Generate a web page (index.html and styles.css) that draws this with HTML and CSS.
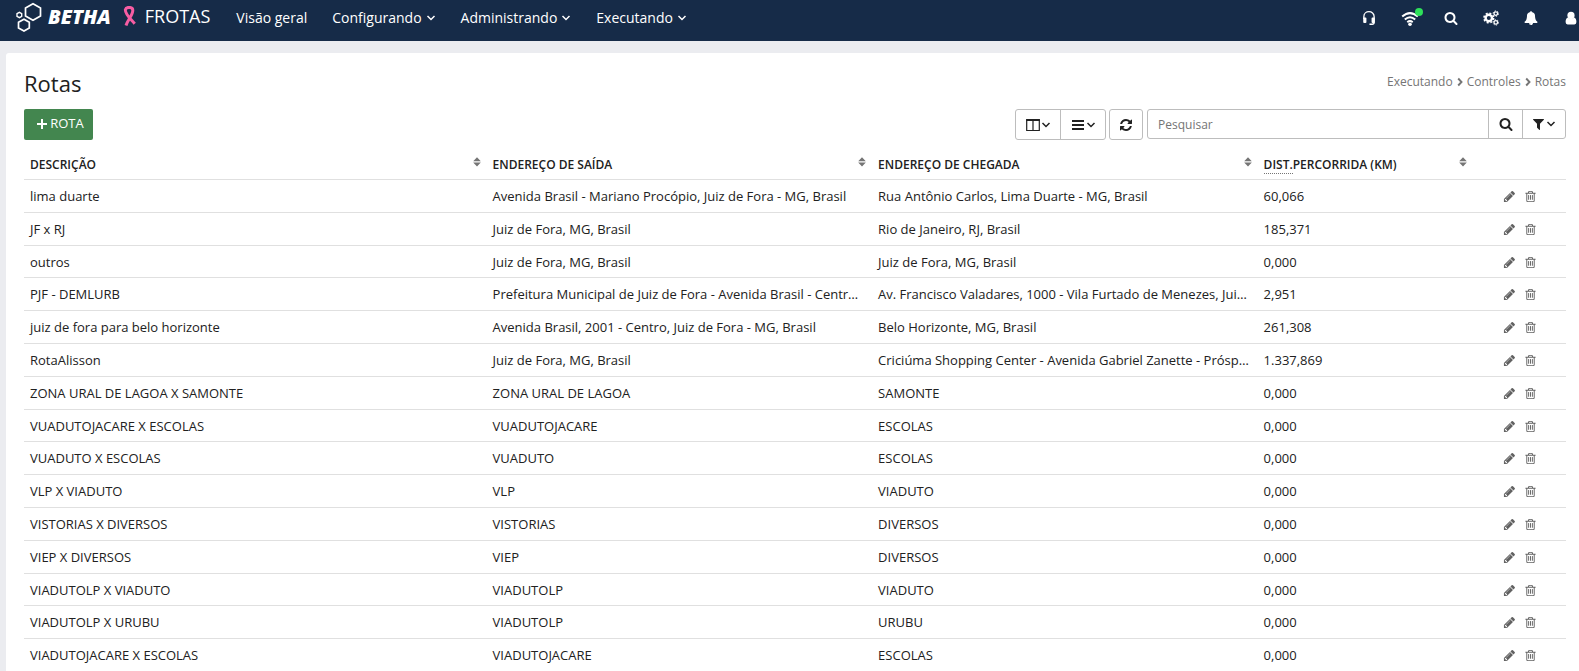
FILE: index.html
```html
<!DOCTYPE html>
<html lang="pt-BR">
<head>
<meta charset="utf-8">
<title>Frotas - Rotas</title>
<link rel="stylesheet" href="styles.css">
</head>
<body>
<svg class="sprite" aria-hidden="true">
  <symbol id="down" viewBox="0 0 10 10"><path d="M1.5 3 L5 6.5 L8.5 3" fill="none" stroke="currentColor" stroke-width="1.5"/></symbol>
  <symbol id="right" viewBox="0 0 6 10"><path d="M1.2 1.5 L4.5 5 L1.2 8.5" fill="none" stroke="currentColor" stroke-width="1.9"/></symbol>
  <symbol id="sort" viewBox="0 0 8 10"><path d="M4 0.3 L7.8 4.2 H0.2Z M0.2 5.6 H7.8 L4 9.6Z"/></symbol>
  <symbol id="search" viewBox="0 0 1792 1792"><path d="M1216 832q0-185-131.5-316.5t-316.5-131.5-316.5 131.5-131.5 316.5 131.5 316.5 316.5 131.5 316.5-131.5 131.5-316.5zm512 832q0 52-38 90t-90 38q-54 0-90-38l-343-342q-179 124-399 124-143 0-273.5-55.5t-225-150-150-225-55.5-273.5 55.5-273.5 150-225 225-150 273.5-55.5 273.5 55.5 225 150 150 225 55.5 273.5q0 220-124 399l343 343q37 37 37 90z"/></symbol>
  <symbol id="filter" viewBox="190 0 1412 1792"><path d="M1595 295q17 41-14 70l-493 493v742q0 42-39 59-13 5-25 5-27 0-45-19l-256-256q-19-19-19-45v-486l-493-493q-31-29-14-70 17-39 59-39h1280q42 0 59 39z"/></symbol>
  <symbol id="refresh" viewBox="0 0 1792 1792"><path d="M1639 1056q0 5-1 7-64 268-268 434.5t-478 166.5q-146 0-282.5-55t-243.5-157l-129 129q-19 19-45 19t-45-19-19-45v-448q0-26 19-45t45-19h448q26 0 45 19t19 45-19 45l-137 137q71 66 161 102t187 36q134 0 250-65t186-179q11-17 53-117 8-23 30-23h192q13 0 22.5 9.5t9.5 22.5zm25-800v448q0 26-19 45t-45 19h-448q-26 0-45-19t-19-45 19-45l138-138q-148-137-349-137-134 0-250 65t-186 179q-11 17-53 117-8 23-30 23h-199q-13 0-22.5-9.5t-9.5-22.5v-7q65-268 270-434.5t480-166.5q146 0 284 55.5t245 156.5l130-129q19-19 45-19t45 19 19 45z"/></symbol>
  <symbol id="pencil" viewBox="0 0 1792 1792"><path d="M491 1536l91-91-235-235-91 91v107h128v128h107zm523-928q0-22-22-22-10 0-17 7l-542 542q-7 7-7 17 0 22 22 22 10 0 17-7l542-542q7-7 7-17zm-54-192l416 416-832 832h-416v-416zm683 96q0 53-37 90l-166 166-416-416 166-165q36-38 90-38 53 0 91 38l235 234q37 39 37 91z"/></symbol>
  <symbol id="trash" viewBox="0 0 1792 1792"><path d="M704 736v576q0 14-9 23t-23 9h-64q-14 0-23-9t-9-23v-576q0-14 9-23t23-9h64q14 0 23 9t9 23zm256 0v576q0 14-9 23t-23 9h-64q-14 0-23-9t-9-23v-576q0-14 9-23t23-9h64q14 0 23 9t9 23zm256 0v576q0 14-9 23t-23 9h-64q-14 0-23-9t-9-23v-576q0-14 9-23t23-9h64q14 0 23 9t9 23zm128 724v-948h-896v948q0 22 7 40.5t14.5 27 10.5 8.5h832q3 0 10.5-8.5t14.5-27 7-40.5zm-672-1076h448l-48-117q-7-9-17-11h-317q-10 2-17 11zm928 32v64q0 14-9 23t-23 9h-96v948q0 83-47 143.5t-113 60.5h-832q-66 0-113-58.5t-47-141.5v-952h-96q-14 0-23-9t-9-23v-64q0-14 9-23t23-9h309l70-167q15-37 54-63t79-26h320q40 0 79 26t54 63l70 167h309q14 0 23 9t9 23z"/></symbol>
  <symbol id="bell" viewBox="0 0 1792 1792"><path d="M912 1696q0-16-16-16-59 0-101.5-42.5t-42.5-101.5q0-16-16-16t-16 16q0 73 51.5 124.5t124.5 51.5q16 0 16-16zm816-288q0 52-38 90t-90 38h-448q0 106-75 181t-181 75-181-75-75-181h-448q-52 0-90-38t-38-90q50-42 91-88t85-119.5 74.5-158.5 50-206 19.5-260q0-152 117-282.5t307-158.5q-8-19-8-39 0-40 28-68t68-28 68 28 28 68q0 20-8 39 190 28 307 158.5t117 282.5q0 139 19.5 260t50 206 74.5 158.5 85 119.5 91 88z"/></symbol>
</svg>

<header class="topbar">
  <a class="brand" href="#">
    <svg class="brand-mark" viewBox="0 0 28 30" aria-hidden="true"><g fill="none" stroke="#fff" stroke-width="1.7"><path d="M10.5 6 L18 1.8 L25.5 6 V14 L18 18.2 L10.5 14Z"/><path d="M3.5 20.3 L9 17.2 L14.3 20.3 V26 L9 29 L3.5 26Z"/><path d="M2 11.6 L4.4 10.3 L6.7 11.6 V14.4 L4.4 15.7 L2 14.4Z" stroke-width="1.4"/></g></svg>
    <span class="brand-name">BETHA</span>
    <svg class="ribbon" viewBox="0 0 14 21" aria-hidden="true"><path d="M3 19.5 C5 13 9.8 9.5 9.8 4.2 C9.8 0.6 3.2 0.6 2.4 3.6 C1.7 8 8.2 13.5 11.7 17.8" fill="none" stroke="#f75da3" stroke-width="3"/></svg>
    <span class="product">FROTAS</span>
  </a>
  <nav class="menu">
    <a href="#">Visão geral</a>
    <a href="#">Configurando<svg class="caret"><use href="#down"/></svg></a>
    <a href="#">Administrando<svg class="caret"><use href="#down"/></svg></a>
    <a href="#">Executando<svg class="caret"><use href="#down"/></svg></a>
  </nav>
  <div class="tools">
    <button type="button" aria-label="Suporte"><svg viewBox="0 0 16 18"><path d="M2.2 10 V7.5 C2.2 0 13.8 0 13.8 7.5 V14 Q13.8 16 11.5 16 H8.5" fill="none" stroke="currentColor" stroke-width="1.5"/><rect x="1.5" y="8.5" width="3.6" height="6" rx="1"/><rect x="10.9" y="8.5" width="3.6" height="6" rx="1"/></svg></button>
    <button type="button" aria-label="Conexão" class="wifi"><svg viewBox="0 0 18 18"><g fill="none" stroke="currentColor" stroke-width="2"><path d="M1.2 7.6 Q9 0.6 16.8 7.6"/><path d="M3.8 10.6 Q9 5.8 14.2 10.6"/><path d="M6.3 13.2 Q9 10.8 11.7 13.2"/></g><circle cx="9" cy="15.2" r="1.8"/></svg><span class="status"></span></button>
    <button type="button" aria-label="Buscar"><svg class="small"><use href="#search"/></svg></button>
    <button type="button" aria-label="Configurações"><svg viewBox="0 0 16 16"><g fill="none" stroke="currentColor"><circle cx="5.8" cy="8" r="3.2" stroke-width="2.4"/><circle cx="5.8" cy="8" r="4.8" stroke-width="1.6" stroke-dasharray="2 1.77"/><circle cx="12.8" cy="3.6" r="1.8" stroke-width="1.3"/><circle cx="12.8" cy="3.6" r="2.7" stroke-width="1" stroke-dasharray="1.3 1.5"/><circle cx="12.8" cy="12.4" r="1.8" stroke-width="1.3"/><circle cx="12.8" cy="12.4" r="2.7" stroke-width="1" stroke-dasharray="1.3 1.5"/></g></svg></button>
    <button type="button" aria-label="Notificações"><svg class="small"><use href="#bell"/></svg></button>
    <button type="button" aria-label="Usuário"><svg viewBox="0 0 16 16"><circle cx="8" cy="5.4" r="3.6"/><path d="M5 7.5 Q2.6 8 2.6 12 Q2.6 14.4 4.6 14.4 H11.4 Q13.4 14.4 13.4 12 Q13.4 8 11 7.5 Q8 10.6 5 7.5Z"/></svg></button>
  </div>
</header>

<main class="card">
  <div class="heading">
    <h1>Rotas</h1>
    <nav class="crumbs" aria-label="Localização"><span>Executando</span><svg><use href="#right"/></svg><span>Controles</span><svg><use href="#right"/></svg><span>Rotas</span></nav>
  </div>
  <div class="actions">
    <button type="button" class="add"><svg viewBox="0 0 10 10"><path d="M5 0 V10 M0 5 H10" stroke="currentColor" stroke-width="2"/></svg>ROTA</button>
    <div class="group push">
      <button type="button" class="view" aria-label="Colunas"><svg class="icon" viewBox="0 0 14 14"><path d="M0.7 2 H13.3 M0.7 1.5 V12.5 H13.3 V1.5 M7 2 V12.5" fill="none" stroke="currentColor" stroke-width="1.2"/><path d="M0.1 1 H13.9 V3 H0.1Z"/></svg><svg class="caret"><use href="#down"/></svg></button>
      <button type="button" class="view" aria-label="Densidade"><svg class="icon" viewBox="0 0 14 14"><path d="M1 3 H13 M1 7 H13 M1 11 H13" stroke="currentColor" stroke-width="2"/></svg><svg class="caret"><use href="#down"/></svg></button>
    </div>
    <div class="group"><button type="button" class="reload" aria-label="Atualizar"><svg class="icon"><use href="#refresh"/></svg></button></div>
    <form class="search group">
      <input type="text" placeholder="Pesquisar" aria-label="Pesquisar">
      <button type="button" class="reload" aria-label="Pesquisar rotas"><svg class="icon"><use href="#search"/></svg></button>
      <button type="button" class="filter" aria-label="Filtros"><svg class="funnel"><use href="#filter"/></svg><svg class="caret"><use href="#down"/></svg></button>
    </form>
  </div>

  <table class="routes">
    <colgroup><col class="c-desc"><col class="c-addr"><col class="c-addr"><col class="c-dist"><col></colgroup>
    <thead>
      <tr>
        <th><div>DESCRIÇÃO<svg><use href="#sort"/></svg></div></th>
        <th><div>ENDEREÇO DE SAÍDA<svg><use href="#sort"/></svg></div></th>
        <th><div>ENDEREÇO DE CHEGADA<svg><use href="#sort"/></svg></div></th>
        <th><div><span><abbr title="Distância">DIST.</abbr>PERCORRIDA (KM)</span><svg><use href="#sort"/></svg></div></th>
        <th></th>
      </tr>
    </thead>
    <tbody>
      <tr><td>lima duarte</td><td>Avenida Brasil - Mariano Procópio, Juiz de Fora - MG, Brasil</td><td>Rua Antônio Carlos, Lima Duarte - MG, Brasil</td><td>60,066</td><td class="ops"><button type="button" aria-label="Editar"><svg><use href="#pencil"/></svg></button><button type="button" aria-label="Excluir"><svg><use href="#trash"/></svg></button></td></tr>
      <tr><td>JF x RJ</td><td>Juiz de Fora, MG, Brasil</td><td>Rio de Janeiro, RJ, Brasil</td><td>185,371</td><td class="ops"><button type="button" aria-label="Editar"><svg><use href="#pencil"/></svg></button><button type="button" aria-label="Excluir"><svg><use href="#trash"/></svg></button></td></tr>
      <tr><td>outros</td><td>Juiz de Fora, MG, Brasil</td><td>Juiz de Fora, MG, Brasil</td><td>0,000</td><td class="ops"><button type="button" aria-label="Editar"><svg><use href="#pencil"/></svg></button><button type="button" aria-label="Excluir"><svg><use href="#trash"/></svg></button></td></tr>
      <tr><td>PJF - DEMLURB</td><td>Prefeitura Municipal de Juiz de Fora - Avenida Brasil - Centr…</td><td>Av. Francisco Valadares, 1000 - Vila Furtado de Menezes, Jui…</td><td>2,951</td><td class="ops"><button type="button" aria-label="Editar"><svg><use href="#pencil"/></svg></button><button type="button" aria-label="Excluir"><svg><use href="#trash"/></svg></button></td></tr>
      <tr><td>juiz de fora para belo horizonte</td><td>Avenida Brasil, 2001 - Centro, Juiz de Fora - MG, Brasil</td><td>Belo Horizonte, MG, Brasil</td><td>261,308</td><td class="ops"><button type="button" aria-label="Editar"><svg><use href="#pencil"/></svg></button><button type="button" aria-label="Excluir"><svg><use href="#trash"/></svg></button></td></tr>
      <tr><td>RotaAlisson</td><td>Juiz de Fora, MG, Brasil</td><td>Criciúma Shopping Center - Avenida Gabriel Zanette - Prósp…</td><td>1.337,869</td><td class="ops"><button type="button" aria-label="Editar"><svg><use href="#pencil"/></svg></button><button type="button" aria-label="Excluir"><svg><use href="#trash"/></svg></button></td></tr>
      <tr><td>ZONA URAL DE LAGOA X SAMONTE</td><td>ZONA URAL DE LAGOA</td><td>SAMONTE</td><td>0,000</td><td class="ops"><button type="button" aria-label="Editar"><svg><use href="#pencil"/></svg></button><button type="button" aria-label="Excluir"><svg><use href="#trash"/></svg></button></td></tr>
      <tr><td>VUADUTOJACARE X ESCOLAS</td><td>VUADUTOJACARE</td><td>ESCOLAS</td><td>0,000</td><td class="ops"><button type="button" aria-label="Editar"><svg><use href="#pencil"/></svg></button><button type="button" aria-label="Excluir"><svg><use href="#trash"/></svg></button></td></tr>
      <tr><td>VUADUTO X ESCOLAS</td><td>VUADUTO</td><td>ESCOLAS</td><td>0,000</td><td class="ops"><button type="button" aria-label="Editar"><svg><use href="#pencil"/></svg></button><button type="button" aria-label="Excluir"><svg><use href="#trash"/></svg></button></td></tr>
      <tr><td>VLP X VIADUTO</td><td>VLP</td><td>VIADUTO</td><td>0,000</td><td class="ops"><button type="button" aria-label="Editar"><svg><use href="#pencil"/></svg></button><button type="button" aria-label="Excluir"><svg><use href="#trash"/></svg></button></td></tr>
      <tr><td>VISTORIAS X DIVERSOS</td><td>VISTORIAS</td><td>DIVERSOS</td><td>0,000</td><td class="ops"><button type="button" aria-label="Editar"><svg><use href="#pencil"/></svg></button><button type="button" aria-label="Excluir"><svg><use href="#trash"/></svg></button></td></tr>
      <tr><td>VIEP X DIVERSOS</td><td>VIEP</td><td>DIVERSOS</td><td>0,000</td><td class="ops"><button type="button" aria-label="Editar"><svg><use href="#pencil"/></svg></button><button type="button" aria-label="Excluir"><svg><use href="#trash"/></svg></button></td></tr>
      <tr><td>VIADUTOLP X VIADUTO</td><td>VIADUTOLP</td><td>VIADUTO</td><td>0,000</td><td class="ops"><button type="button" aria-label="Editar"><svg><use href="#pencil"/></svg></button><button type="button" aria-label="Excluir"><svg><use href="#trash"/></svg></button></td></tr>
      <tr><td>VIADUTOLP X URUBU</td><td>VIADUTOLP</td><td>URUBU</td><td>0,000</td><td class="ops"><button type="button" aria-label="Editar"><svg><use href="#pencil"/></svg></button><button type="button" aria-label="Excluir"><svg><use href="#trash"/></svg></button></td></tr>
      <tr><td>VIADUTOJACARE X ESCOLAS</td><td>VIADUTOJACARE</td><td>ESCOLAS</td><td>0,000</td><td class="ops"><button type="button" aria-label="Editar"><svg><use href="#pencil"/></svg></button><button type="button" aria-label="Excluir"><svg><use href="#trash"/></svg></button></td></tr>
    </tbody>
  </table>
</main>
</body>
</html>
```

FILE: styles.css
```css
* { box-sizing: border-box; }

html { overflow: hidden; }

body {
  margin: 0;
  background: #ebecf0;
  color: #212121;
  font: 13px/1.6 "Open Sans", "Noto Sans", sans-serif;
}

svg { display: block; flex: none; fill: currentColor; }
.sprite { display: none; }

button {
  display: flex;
  align-items: center;
  justify-content: center;
  margin: 0;
  padding: 0;
  border: 0;
  background: none;
  color: inherit;
  font: inherit;
  cursor: pointer;
}

/* Top bar */
.topbar {
  display: flex;
  height: 41px;
  padding-left: 15px;
  background: #162b48;
  color: #fff;
}
.topbar a { color: inherit; text-decoration: none; }
.brand { display: flex; align-items: center; height: 33px; }
.brand-mark { width: 28px; height: 30px; }
.brand-name {
  margin-left: 5px;
  font-size: 20px;
  font-weight: 800;
  font-style: italic;
}
.ribbon { width: 14px; height: 21px; margin-left: 12px; }
.product { margin-left: 8px; font-size: 18px; }
.menu {
  display: flex;
  gap: 25px;
  align-items: center;
  height: 36px;
  margin-left: 26px;
  font-size: 14px;
}
.menu a { display: flex; align-items: center; gap: 4px; }
.caret { width: 10px; height: 10px; }
.tools {
  display: flex;
  align-items: center;
  gap: 24px;
  height: 36px;
  margin-left: auto;
}
.tools svg { width: 16px; height: 16px; }
.tools .small { width: 14px; height: 14px; margin: 0 1px; }
.wifi { position: relative; }
.tools .wifi svg { width: 18px; height: 18px; }
.status {
  position: absolute;
  top: -1px;
  right: -4px;
  width: 8px;
  height: 8px;
  border-radius: 50%;
  background: #2ee05a;
}

/* Content card */
.card {
  min-height: calc(100vh - 53px);
  margin: 12px 0 0 6px;
  padding: 13px 13px 0 18px;
  border-radius: 3px 0 0 0;
  background: #fff;
}
.heading {
  display: flex;
  justify-content: space-between;
  height: 36px;
}
h1 { margin: 0; font-size: 22px; font-weight: 400; line-height: 34px; }
.crumbs { display: flex; align-items: center; gap: 4px; height: 31px; color: #757575; font-size: 12px; }
.crumbs svg { width: 6px; height: 10px; }

.actions { display: flex; align-items: flex-start; margin-top: 7px; }
.add {
  gap: 3px;
  width: 69px;
  height: 31px;
  padding: 0 0 2px 4px;
  border-radius: 2px;
  background: #43864f;
  color: #fff;
}
.add svg { width: 10px; height: 10px; }
.group { display: flex; margin-right: 4px; border: 1px solid #bdbdbd; border-radius: 3px; }
.group > * + * { border-left: 1px solid #bdbdbd; }
.group.push { margin-left: auto; margin-right: 3px; }
.view { width: 44px; height: 29px; }
.view + .view { width: 45px; }
.view .icon { margin-right: 1px; }
.reload { width: 32px; height: 29px; }
.icon { width: 14px; height: 14px; }
.funnel { width: 11px; height: 14px; margin-right: 2px; }
.search { width: 419px; height: 30px; margin-right: 0; }
.search input {
  flex: 1;
  min-width: 0;
  padding: 2px 10px 0;
  border: 0;
  background: none;
  color: inherit;
  font: inherit;
  font-size: 12px;
}
.search input::placeholder { color: #757575; opacity: 1; }
.search button { height: 28px; }
.search .reload { width: 34px; }
.filter { width: 43px; }

/* Routes table */
.routes {
  width: 100%;
  margin-top: 8px;
  border-collapse: separate;
  border-spacing: 0;
  table-layout: fixed;
}
.c-desc { width: 30%; }
.c-addr { width: 25%; }
.c-dist { width: 14%; }
.routes th,
.routes td {
  padding: 6px 6px 5px;
  border-bottom: 1px solid #e0e0e0;
  text-align: left;
  white-space: nowrap;
  overflow: hidden;
  text-overflow: ellipsis;
}
.routes th { padding: 6px 6px 4px; font-size: 12px; font-weight: 600; }
.routes th div { display: flex; justify-content: space-between; line-height: 21px; }
.routes th svg { width: 8px; height: 10px; margin-top: 3px; color: #757575; }
.routes abbr { border-bottom: 1px dotted #757575; text-decoration: none; }
.routes .ops { padding: 0 0 1px 30px; }
.ops button { display: inline-flex; margin-right: 8px; vertical-align: middle; color: #616161; }
.ops svg { width: 13px; height: 13px; }
```
